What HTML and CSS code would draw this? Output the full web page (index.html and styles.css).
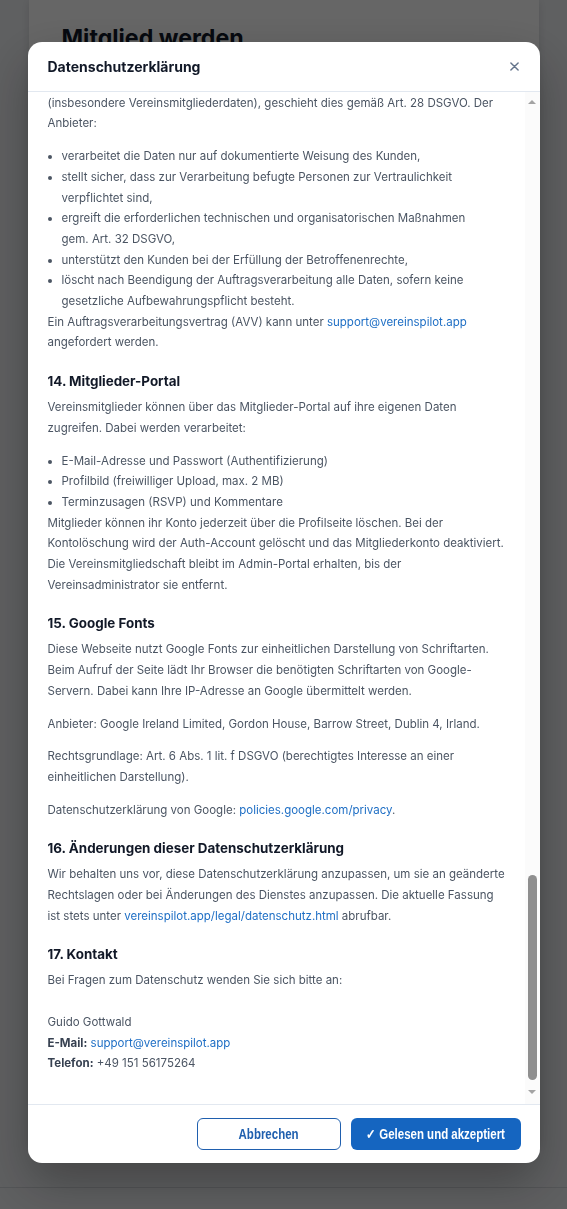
FILE: index.html
```html
<!DOCTYPE html>
<html lang="de">
<head>
<meta charset="utf-8">
<title>Mitglied werden – Datenschutzerklärung</title>
<link rel="stylesheet" href="styles.css">
</head>
<body class="modal-open">
<div class="page">
  <main class="card">
    <h1 class="card-title">Mitglied werden</h1>
  </main>
  <footer class="site-footer"></footer>
</div>

<div class="overlay">
  <div class="modal" role="dialog" aria-labelledby="modal-title">
    <div class="modal-header">
      <h2 class="modal-title" id="modal-title">Datenschutzerklärung</h2>
      <button class="modal-close" type="button" aria-label="Schließen">
        <svg viewBox="0 0 10 10" width="10" height="10" aria-hidden="true"><path d="M1 1 L9 9 M9 1 L1 9" stroke="currentColor" stroke-width="1.6" stroke-linecap="round" fill="none"/></svg>
      </button>
    </div>
    <div class="modal-body">
      <div class="modal-scroll">
      <div class="policy">
        <h3>1. Verantwortlicher</h3>
        <p>Verantwortlich für die Datenverarbeitung auf dieser Webseite und in der Anwendung VereinsPilot ist:</p>
        <p>Guido Gottwald<br>VereinsPilot<br>E-Mail: <a href="#">support@vereinspilot.app</a><br>Telefon: +49 151 56175264</p>

        <h3>2. Allgemeines zur Datenverarbeitung</h3>
        <p>Wir verarbeiten personenbezogene Daten nur, soweit dies zur Bereitstellung einer funktionsfähigen Anwendung sowie unserer Inhalte und Leistungen erforderlich ist. Die Verarbeitung erfolgt auf Grundlage der Datenschutz-Grundverordnung (DSGVO) und des Bundesdatenschutzgesetzes (BDSG).</p>
        <p>Personenbezogene Daten sind alle Informationen, die sich auf eine identifizierte oder identifizierbare natürliche Person beziehen, zum Beispiel Name, Anschrift, E-Mail-Adresse oder IP-Adresse.</p>

        <h3>3. Hosting</h3>
        <p>Die Anwendung wird bei einem externen Dienstleister gehostet. Die Server befinden sich in der Europäischen Union. Personenbezogene Daten, die in der Anwendung erfasst werden, werden auf den Servern des Hosters gespeichert.</p>
        <p>Rechtsgrundlage: Art. 6 Abs. 1 lit. b und f DSGVO. Mit dem Hoster wurde ein Vertrag zur Auftragsverarbeitung geschlossen.</p>

        <h3>4. Server-Logfiles</h3>
        <p>Beim Aufruf der Webseite werden automatisch Informationen erfasst, die Ihr Browser übermittelt:</p>
        <ul>
          <li>Browsertyp und Browserversion</li>
          <li>verwendetes Betriebssystem</li>
          <li>Referrer-URL</li>
          <li>Hostname des zugreifenden Rechners</li>
          <li>Uhrzeit der Serveranfrage</li>
          <li>IP-Adresse</li>
        </ul>
        <p>Diese Daten werden nicht mit anderen Datenquellen zusammengeführt und nach spätestens 14 Tagen gelöscht. Rechtsgrundlage ist Art. 6 Abs. 1 lit. f DSGVO.</p>

        <h3>5. Registrierung und Benutzerkonto</h3>
        <p>Für die Nutzung der Vereinsverwaltung ist eine Registrierung erforderlich. Dabei werden folgende Daten erhoben:</p>
        <ul>
          <li>Name des Vereins und des Ansprechpartners</li>
          <li>E-Mail-Adresse und Passwort (verschlüsselt gespeichert)</li>
          <li>Rolle im Verein (z.&nbsp;B. Vorstand, Kassenwart)</li>
          <li>Zeitpunkt der Registrierung</li>
        </ul>
        <p>Die Verarbeitung erfolgt zur Erfüllung des Nutzungsvertrags gemäß Art. 6 Abs. 1 lit. b DSGVO. Das Konto kann jederzeit gelöscht werden.</p>

        <h3>6. Mitgliederverwaltung</h3>
        <p>Vereine können in VereinsPilot Daten ihrer Mitglieder verwalten. Typischerweise werden dabei verarbeitet:</p>
        <ul>
          <li>Vor- und Nachname, Geburtsdatum</li>
          <li>Anschrift, Telefonnummer, E-Mail-Adresse</li>
          <li>Eintrittsdatum und Mitgliedsstatus</li>
          <li>Bankverbindung für den Beitragseinzug (SEPA)</li>
          <li>Abteilungs- und Gruppenzugehörigkeit</li>
        </ul>
        <p>Verantwortlich für diese Daten ist der jeweilige Verein. VereinsPilot handelt insoweit als Auftragsverarbeiter (siehe Abschnitt 13).</p>

        <h3>7. Online-Mitgliedsantrag</h3>
        <p>Über das Formular „Mitglied werden“ können Interessenten einen Aufnahmeantrag an den Verein stellen. Die eingegebenen Daten werden ausschließlich an den jeweiligen Verein übermittelt und dort bearbeitet.</p>
        <p>Rechtsgrundlage ist Art. 6 Abs. 1 lit. b DSGVO (vorvertragliche Maßnahmen). Wird der Antrag abgelehnt, werden die Daten nach 6 Monaten gelöscht.</p>

        <h3>8. Beitragseinzug und Zahlungen</h3>
        <p>Für den Einzug von Mitgliedsbeiträgen per SEPA-Lastschrift werden IBAN, BIC und Name des Kontoinhabers gespeichert. Die Daten werden ausschließlich für den Beitragseinzug verwendet und nur an das kontoführende Kreditinstitut des Vereins übermittelt.</p>
        <p>Rechtsgrundlage: Art. 6 Abs. 1 lit. b DSGVO. Steuerrechtliche Aufbewahrungsfristen (bis zu 10 Jahre) bleiben unberührt.</p>

        <h3>9. E-Mail-Benachrichtigungen</h3>
        <p>VereinsPilot versendet E-Mails, z.&nbsp;B. für Einladungen, Terminerinnerungen und das Zurücksetzen des Passworts. Für den Versand nutzen wir einen Dienstleister mit Sitz in der EU.</p>
        <ul>
          <li>Transaktions-E-Mails (Passwort, Bestätigungen)</li>
          <li>Terminerinnerungen und Vereinsnachrichten</li>
          <li>Rundschreiben des Vereins</li>
        </ul>
        <p>Benachrichtigungen können in den Kontoeinstellungen jederzeit deaktiviert werden.</p>

        <h3>10. Cookies und lokale Speicherung</h3>
        <p>Wir verwenden ausschließlich technisch notwendige Cookies und den lokalen Speicher des Browsers (Local Storage), um Sie angemeldet zu halten und Ihre Einstellungen zu speichern. Tracking- oder Marketing-Cookies werden nicht eingesetzt.</p>
        <p>Rechtsgrundlage ist § 25 Abs. 2 Nr. 2 TTDSG sowie Art. 6 Abs. 1 lit. f DSGVO.</p>

        <h3>11. Speicherdauer und Datensicherheit</h3>
        <p>Personenbezogene Daten werden gelöscht, sobald der Zweck der Speicherung entfällt und keine gesetzlichen Aufbewahrungspflichten entgegenstehen. Nach Kündigung eines Vereinskontos werden alle Daten innerhalb von 30 Tagen gelöscht.</p>
        <p>Alle Verbindungen werden per TLS verschlüsselt. Passwörter werden ausschließlich als sicherer Hash gespeichert.</p>

        <h3>12. Ihre Rechte</h3>
        <p>Sie haben jederzeit das Recht auf:</p>
        <ul>
          <li>Auskunft über Ihre gespeicherten Daten (Art. 15 DSGVO)</li>
          <li>Berichtigung unrichtiger Daten (Art. 16 DSGVO)</li>
          <li>Löschung (Art. 17 DSGVO)</li>
          <li>Einschränkung der Verarbeitung (Art. 18 DSGVO)</li>
          <li>Datenübertragbarkeit (Art. 20 DSGVO)</li>
          <li>Widerspruch gegen die Verarbeitung (Art. 21 DSGVO)</li>
        </ul>
        <p>Außerdem können Sie sich bei einer Datenschutz-Aufsichtsbehörde beschweren. Zuständig ist die Behörde Ihres Wohnorts oder unseres Sitzes.</p>

        <h3>13. Auftragsverarbeitung</h3>
        <p>Soweit VereinsPilot personenbezogene Daten im Auftrag der nutzenden Vereine verarbeitet<br>(insbesondere Vereinsmitgliederdaten), geschieht dies gemäß Art.&nbsp;28 DSGVO. Der Anbieter:</p>
        <ul>
          <li>verarbeitet die Daten nur auf dokumentierte Weisung des Kunden,</li>
          <li>stellt sicher, dass zur Verarbeitung befugte Personen zur Vertraulichkeit verpflichtet sind,</li>
          <li>ergreift die erforderlichen technischen und organisatorischen Maßnahmen gem.&nbsp;Art.&nbsp;32 DSGVO,</li>
          <li>unterstützt den Kunden bei der Erfüllung der Betroffenenrechte,</li>
          <li>löscht nach Beendigung der Auftragsverarbeitung alle Daten, sofern keine gesetzliche Aufbewahrungspflicht besteht.</li>
        </ul>
        <p>Ein Auftragsverarbeitungsvertrag (AVV) kann unter <a href="#">support@vereinspilot.app</a> angefordert werden.</p>

        <h3>14. Mitglieder-Portal</h3>
        <p>Vereinsmitglieder können über das Mitglieder-Portal auf ihre eigenen Daten zugreifen. Dabei werden verarbeitet:</p>
        <ul>
          <li>E-Mail-Adresse und Passwort (Authentifizierung)</li>
          <li>Profilbild (freiwilliger Upload, max. 2 MB)</li>
          <li>Terminzusagen (RSVP) und Kommentare</li>
        </ul>
        <p>Mitglieder können ihr Konto jederzeit über die Profilseite löschen. Bei der Kontolöschung wird der Auth-Account gelöscht und das Mitgliederkonto deaktiviert. Die Vereinsmitgliedschaft bleibt im Admin-Portal erhalten, bis der Vereinsadministrator sie entfernt.</p>

        <h3>15. Google Fonts</h3>
        <p>Diese Webseite nutzt Google Fonts zur einheitlichen Darstellung von Schriftarten. Beim Aufruf der Seite lädt Ihr Browser die benötigten Schriftarten von Google-Servern. Dabei kann Ihre IP-Adresse an Google übermittelt werden.</p>
        <p>Anbieter: Google Ireland Limited, Gordon House, Barrow Street, Dublin 4, Irland.</p>
        <p>Rechtsgrundlage: Art. 6 Abs. 1 lit. f DSGVO (berechtigtes Interesse an einer einheitlichen Darstellung).</p>
        <p>Datenschutzerklärung von Google: <a href="#">policies.google.com/privacy</a>.</p>

        <h3>16. Änderungen dieser Datenschutzerklärung</h3>
        <p>Wir behalten uns vor, diese Datenschutzerklärung anzupassen, um sie an geänderte Rechtslagen oder bei Änderungen des Dienstes anzupassen. Die aktuelle Fassung ist stets unter <a href="#">vereinspilot.app/legal/datenschutz.html</a> abrufbar.</p>

        <h3>17. Kontakt</h3>
        <p>Bei Fragen zum Datenschutz wenden Sie sich bitte an:<br><br>Guido Gottwald<br><strong>E-Mail:</strong> <a href="#">support@vereinspilot.app</a><br><strong>Telefon:</strong> +49 151 56175264</p>
      </div>
      </div>
      <div class="scrollbar" aria-hidden="true">
        <span class="sb-arrow sb-up"></span>
        <div class="sb-track"><span class="sb-thumb" style="top: 78.5%; height: 21.1%;"></span></div>
        <span class="sb-arrow sb-down"></span>
      </div>
    </div>
    <div class="modal-footer">
      <button class="btn btn-outline" type="button"><span class="btn-label">Abbrechen</span></button>
      <button class="btn btn-primary" type="button"><span class="btn-label">✓ Gelesen und akzeptiert</span></button>
    </div>
  </div>
</div>
</body>
</html>
```

FILE: styles.css
```css
html, body {
  margin: 0;
  padding: 0;
}

body {
  background: #eef0f3;
  font-family: Inter, "Noto Sans", "Liberation Sans", sans-serif;
  color: #111827;
}

body.modal-open {
  overflow: hidden;
}

/* background page */
.page {
  min-height: 100vh;
}

.card {
  box-sizing: border-box;
  width: 510px;
  height: 1150px;
  margin: 0 auto;
  padding: 24px 33px;
  background: #ffffff;
  border-radius: 0 0 12px 12px;
  box-shadow: 0 2px 10px rgba(0, 0, 0, 0.12);
}

.card-title {
  margin: 0;
  font-size: 23.2px;
  line-height: 29px;
  font-weight: 700;
  color: #111827;
}

.site-footer {
  margin-top: 37px;
  height: 20px;
  border-top: 1px solid #d2d5da;
}

/* overlay + modal */
.overlay {
  position: fixed;
  inset: 0;
  box-sizing: border-box;
  display: flex;
  justify-content: center;
  align-items: flex-start;
  padding-top: 42px;
  background: rgba(0, 0, 0, 0.6);
}

.modal {
  width: 512px;
  height: calc(100vh - 88px);
  display: flex;
  flex-direction: column;
  background: #ffffff;
  border-radius: 14px;
  overflow: hidden;
  box-shadow: 0 20px 50px rgba(0, 0, 0, 0.3);
}

.modal-header {
  flex: none;
  height: 49px;
  display: flex;
  align-items: center;
  justify-content: space-between;
  padding: 0 20px;
  border-bottom: 1px solid #e2e8f0;
}

.modal-title {
  margin: 0;
  font-size: 14px;
  font-weight: 700;
  color: #111827;
}

.modal-close {
  display: flex;
  align-items: center;
  justify-content: center;
  width: 14px;
  height: 14px;
  padding: 0;
  margin-right: -2px;
  border: 0;
  background: none;
  color: #64748b;
  cursor: pointer;
}

.modal-close svg {
  width: 9px;
  height: 9px;
}

.modal-body {
  flex: 1;
  min-height: 0;
  display: flex;
}

.modal-scroll {
  flex: 1;
  min-width: 0;
  overflow-y: auto;
  scrollbar-width: none;
  display: flex;
  flex-direction: column-reverse;
}

.modal-scroll::-webkit-scrollbar {
  display: none;
}

/* drawn scrollbar */
.scrollbar {
  flex: none;
  width: 15px;
  display: flex;
  flex-direction: column;
  background: #fbfbfb;
}

.sb-arrow {
  flex: none;
  height: 16px;
  display: flex;
  align-items: center;
  justify-content: center;
}

.sb-arrow::before {
  content: "";
  width: 0;
  height: 0;
  border-left: 4px solid transparent;
  border-right: 4px solid transparent;
}

.sb-up {
  padding-top: 2px;
}

.sb-up::before {
  border-bottom: 4px solid #a3a3a3;
}

.sb-down {
  padding-bottom: 4px;
}

.sb-down::before {
  border-top: 4px solid #a3a3a3;
}

.sb-track {
  flex: 1;
  position: relative;
}

.sb-thumb {
  position: absolute;
  left: 3px;
  right: 3px;
  border-radius: 5px;
  background: #8f8f8f;
}

.policy {
  padding: 8px 16px 18px 20px;
  font-size: 11.5px;
  line-height: 20.7px;
  color: #4b5563;
}

.policy h3 {
  margin: 18px 0 5px;
  font-size: 13.4px;
  line-height: 21px;
  font-weight: 700;
  color: #111827;
}

.policy h3:first-child {
  margin-top: 12px;
}

.policy p {
  margin: 0 0 12px;
}

.policy ul {
  margin: 0;
  padding-left: 14px;
}

.policy a {
  color: #1f6fc5;
  text-decoration: none;
}

.policy strong {
  color: #374151;
  font-weight: 700;
}

.modal-footer {
  flex: none;
  display: flex;
  justify-content: flex-end;
  gap: 10px;
  padding: 13px 19px 13px;
  border-top: 1px solid #e2e8f0;
}

.btn {
  box-sizing: border-box;
  height: 32px;
  padding: 0;
  border-radius: 6px;
  font-family: "Liberation Sans", Arial, sans-serif;
  font-size: 14px;
  font-weight: 700;
  white-space: nowrap;
  display: flex;
  align-items: center;
  justify-content: center;
  cursor: pointer;
}

.btn-label {
  display: inline-block;
  transform: scaleX(0.82);
}

.btn-outline {
  width: 144px;
  background: #ffffff;
  color: #1f5fae;
  border: 1.5px solid #1f5fae;
}

.btn-primary {
  width: 170px;
  background: #1565c0;
  color: #ffffff;
  border: 0;
}
```
